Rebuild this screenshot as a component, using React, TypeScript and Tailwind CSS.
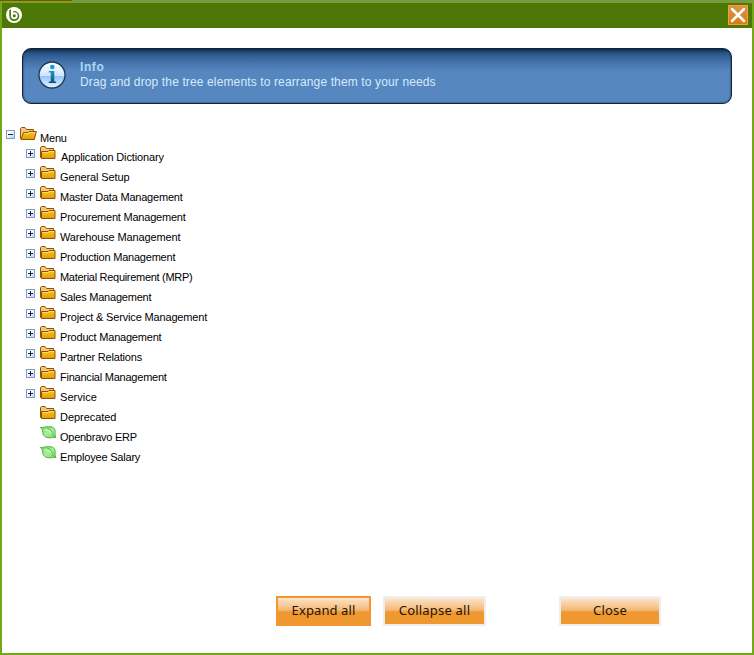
import React from "react";

const items = [
  { label: "Application Dictionary", kind: "branch", text: "pl-px tracking-[-0.13px]" },
  { label: "General Setup", kind: "branch", text: "tracking-[-0.12px]" },
  { label: "Master Data Management", kind: "branch", text: "tracking-[-0.21px]" },
  { label: "Procurement Management", kind: "branch", text: "tracking-[-0.21px]" },
  { label: "Warehouse Management", kind: "branch", text: "tracking-[-0.14px]" },
  { label: "Production Management", kind: "branch", text: "tracking-[-0.22px]" },
  { label: "Material Requirement (MRP)", kind: "branch", text: "tracking-[-0.29px]" },
  { label: "Sales Management", kind: "branch", text: "tracking-[-0.22px]" },
  { label: "Project & Service Management", kind: "branch", text: "tracking-[-0.16px]" },
  { label: "Product Management", kind: "branch", text: "tracking-[-0.21px]" },
  { label: "Partner Relations", kind: "branch", text: "tracking-[-0.17px]" },
  { label: "Financial Management", kind: "branch", text: "tracking-[-0.23px]" },
  { label: "Service", kind: "branch", text: "tracking-[0.05px]" },
  { label: "Deprecated", kind: "folder", text: "tracking-[-0.05px]" },
  { label: "Openbravo ERP", kind: "leaf", text: "tracking-[-0.26px]" },
  { label: "Employee Salary", kind: "leaf", text: "tracking-[-0.2px]" },
];

function Toggle({ open = false }: { open?: boolean }) {
  return (
    <svg width="9" height="9" viewBox="0 0 9 9" shapeRendering="crispEdges" className="mt-[3px] shrink-0">
      <defs>
        <linearGradient id="toggle" x1="0" y1="0" x2="1" y2="1">
          <stop offset="0.3" stopColor="#ffffff" />
          <stop offset="1" stopColor="#b4cdec" />
        </linearGradient>
      </defs>
      <rect x="0.5" y="0.5" width="8" height="8" fill="url(#toggle)" stroke="#7d9cc0" />
      <path d={open ? "M2 4.5h5" : "M2 4.5h5M4.5 2v5"} stroke="#18263f" />
    </svg>
  );
}

function Folder({ open = false }: { open?: boolean }) {
  return (
    <svg width="17" height="13" viewBox="0 0 17 13" className="shrink-0">
      <defs>
        <linearGradient id="folder" x1="0" y1="0" x2="0" y2="1">
          <stop offset="0" stopColor="#ffc51c" />
          <stop offset="1" stopColor="#dc9f06" />
        </linearGradient>
      </defs>
      <path d="M.5 11.500V1.500l1-1H5l1.500 2h7v9z" fill="#f5c877" stroke="#934e0a" />
      <path
        d={open ? "M1 12.500 3.500 5.500H8l1-1h7.300l-2 8z" : "M1.500 12.500V5.500H8l1-1h6v8z"}
        fill="url(#folder)"
        stroke="#934e0a"
      />
      <path d={open ? "M4.200 6.500h4.200l1-1h5.600" : "M2.500 6.500H8.400l1-1h4.600"} fill="none" stroke="#ffe26e" strokeWidth=".9" />
    </svg>
  );
}

function Leaf() {
  return (
    <svg width="17" height="14" viewBox="0 0 17 14" className="shrink-0">
      <defs>
        <linearGradient id="leaf" x1="0" y1="0" x2="1" y2="1">
          <stop offset="0" stopColor="#62d654" />
          <stop offset="0.5" stopColor="#aaee98" />
          <stop offset="1" stopColor="#74da60" />
        </linearGradient>
      </defs>
      <path
        d="M.4 1.600C3 1.800 5 .6 8.500.6c3.800 0 6.200 1 6.600 4 .3 2.600-.4 4.700.7 7-1 .3-1.500-.2-2.300-.2-2.500.7-6.200.8-8.700-.9C2.400 8.900 2.800 6.500 2.600 5 2.300 3.500 1.700 2.600.4 1.600z"
        fill="url(#leaf)"
        stroke="#4faa48"
        strokeWidth=".9"
      />
      <path d="M4.200 4.200c4.200-.4 7 1.200 8.600 4.500" fill="none" stroke="#d6f9ca" strokeWidth="1.100" />
      <path d="M7.500 2.200c3.200 1 4.600 3.200 5 6.300.6 1.200 1.300 2 2.500 2.700" fill="none" stroke="#46b43a" strokeWidth=".9" />
    </svg>
  );
}

function Logo() {
  return (
    <svg width="16" height="16" viewBox="0 0 16 16">
      <circle cx="8" cy="8" r="8" fill="#fff" />
      <path d="M3.300 3.200 5 2.200V7.500h1.800V4.300a5 5 0 1 1-3.500 4.500z" fill="#4d7706" />
      <path d="M5 1.500h2.200v6.500H5z" fill="#fff" />
      <circle cx="8.300" cy="8.700" r="2.500" fill="#4d7706" stroke="#fff" strokeWidth="1.900" />
    </svg>
  );
}

function InfoIcon() {
  return (
    <svg width="28" height="28" viewBox="0 0 28 28">
      <defs>
        <linearGradient id="info" x1="0" y1="0" x2="0" y2="1">
          <stop offset="0" stopColor="#ffffff" />
          <stop offset="0.52" stopColor="#cfe5fc" />
          <stop offset="0.54" stopColor="#92c5fb" />
          <stop offset="1" stopColor="#e4f4ff" />
        </linearGradient>
        <linearGradient id="glyph" x1="0" y1="0" x2="0" y2="1">
          <stop offset="0" stopColor="#2494cc" />
          <stop offset="1" stopColor="#124d74" />
        </linearGradient>
      </defs>
      <circle cx="14" cy="14" r="13" fill="url(#info)" stroke="#203652" strokeWidth="1.300" />
      <circle cx="14.300" cy="6" r="2.300" fill="#129bdd" />
      <path d="M10.800 10H16.300V20.500h1.900V22h-7.400v-1.500h1.900v-9h-1.900z" fill="url(#glyph)" />
    </svg>
  );
}

function Button({ label, className, text }: { label: string; className: string; text: string }) {
  return (
    <button
      className={
        "h-[30px] border-2 bg-[#f09830] bg-[linear-gradient(to_bottom,#fbe5cd_0px,#f5b977_12px,#f09830_14px,#f09830_100%)] bg-origin-padding pb-[3px] font-['Noto_Sans',sans-serif] text-[13px] leading-[22px] text-[#241505] " +
        className
      }
    >
      <span className={"block whitespace-nowrap " + text}>{label}</span>
    </button>
  );
}

export default function App() {
  return (
    <div className="flex h-[655px] w-[754px] flex-col overflow-hidden bg-white font-['Liberation_Sans',Arial,sans-serif]">
      <div className="flex h-px shrink-0">
        <div className="w-[72px] bg-[#8a4a17]" />
        <div className="flex-1 bg-[#858585]" />
      </div>
      <div className="flex min-h-0 flex-1 flex-col border-2 border-[#72a816]">
        <header className="flex h-[25px] shrink-0 items-start justify-between bg-[#4d7706] pl-1 pr-1">
          <div className="mt-1">
            <Logo />
          </div>
          <button className="mt-[2px] flex h-5 w-5 items-center justify-center border border-[#ff9c38] bg-gradient-to-b from-[#d99345] to-[#d67d12]">
            <svg width="16" height="16" viewBox="0 0 16 16">
              <path d="m2 2 12 12M14 2 2 14" stroke="#fff" strokeWidth="2.500" strokeLinecap="round" />
            </svg>
          </button>
        </header>

        <section className="mx-5 mt-5 flex h-14 shrink-0 rounded-[9px] border border-[#10233a] bg-[linear-gradient(to_bottom,#12304f_0px,#2a588d_5px,#4473ac_13px,#5686be_22px,#5787c0_100%)] pl-[15px] shadow-[inset_0_0_2px_#10233a]">
          <div className="mt-[12px]">
            <InfoIcon />
          </div>
          <div className="ml-[14px] mt-[11px] text-[12px] leading-[15px]">
            <h1 className="text-[12px] font-bold tracking-[0.6px] text-[#a9d8f3]">Info</h1>
            <p className="whitespace-nowrap tracking-[0.13px] text-[#d5eafa]">
              Drag and drop the tree elements to rearrange them to your needs
            </p>
          </div>
        </section>

        <ul className="mt-[21px] pl-1 text-[11px] leading-[14px] text-black">
          <li className="flex h-5 pt-[2px]">
            <Toggle open />
            <span className="ml-[5px] w-5 shrink-0">
              <Folder open />
            </span>
            <span className="mt-[4px] tracking-[-0.2px]">Menu</span>
          </li>
          {items.map((item) => (
            <li key={item.label} className="flex h-5 pl-5 pt-[1px]">
              <span className="w-[14px] shrink-0">{item.kind === "branch" && <Toggle />}</span>
              <span className="w-5 shrink-0">{item.kind === "leaf" ? <Leaf /> : <Folder />}</span>
              <span className={"mt-[4px] whitespace-nowrap " + item.text}>{item.label}</span>
            </li>
          ))}
        </ul>

        <footer className="mb-[27px] mt-auto flex pl-[274px]">
          <Button label="Expand all" className="w-[95px] border-[#f39631]" text="tracking-[0.1px]" />
          <Button label="Collapse all" className="ml-3 w-[103px] border-[#eeeef0]" text="tracking-[0.2px]" />
          <Button label="Close" className="ml-[73px] w-[102px] border-[#eeeef0]" text="tracking-[0.2px]" />
        </footer>
      </div>
    </div>
  );
}
